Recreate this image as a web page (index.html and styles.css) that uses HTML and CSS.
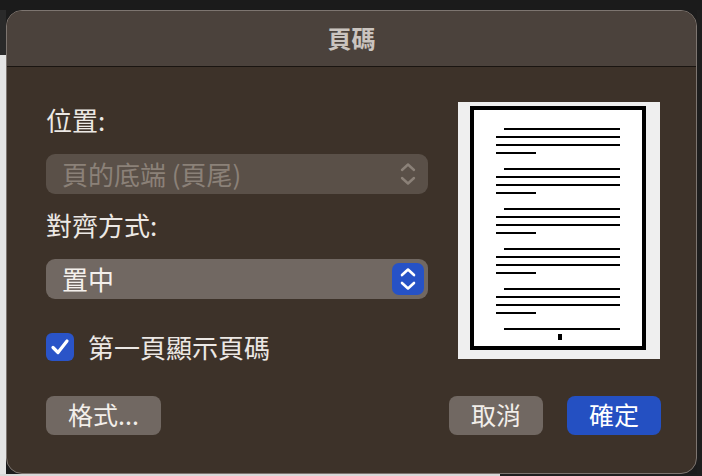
FILE: index.html
```html
<!DOCTYPE html>
<html lang="zh-Hant">
<head>
  <meta charset="UTF-8">
  <meta name="viewport" content="width=device-width, initial-scale=1.0">
  <title>頁碼</title>
  <link rel="stylesheet" href="styles.css">
</head>
<body>

  <div class="top-strip"></div>

  <div class="desk">
    <div class="side-left"></div>

    <!-- 頁碼 對話框 -->
    <div class="dialog">
      <div class="titlebar">頁碼</div>

      <div class="content">
        <div class="options">
          <label class="field-label">位置:</label>
          <div class="popup disabled">
            <span>頁的底端 (頁尾)</span>
            <svg class="chevrons" width="20" height="26" viewBox="0 0 20 26">
              <path d="M4 9 L10 3.5 L16 9 M4 17 L10 22.5 L16 17" fill="none" stroke="#8b8178" stroke-width="2.4" stroke-linecap="round" stroke-linejoin="round"/>
            </svg>
          </div>

          <label class="field-label second">對齊方式:</label>
          <div class="popup">
            <span>置中</span>
            <div class="popup-arrows">
              <svg width="20" height="26" viewBox="0 0 20 26">
                <path d="M4 9 L10 3.5 L16 9 M4 17 L10 22.5 L16 17" fill="none" stroke="#ffffff" stroke-width="2.6" stroke-linecap="round" stroke-linejoin="round"/>
              </svg>
            </div>
          </div>

          <div class="check-row">
            <span class="checkbox">
              <svg width="28" height="28" viewBox="0 0 28 28">
                <path d="M7 14.5 L12 19.5 L21 8" fill="none" stroke="#ffffff" stroke-width="3.2" stroke-linecap="round" stroke-linejoin="round"/>
              </svg>
            </span>
            <span>第一頁顯示頁碼</span>
          </div>
        </div>

        <!-- 預覽 -->
        <div class="preview">
          <svg width="202" height="257" viewBox="0 0 202 257">
            <rect x="0" y="0" width="202" height="257" fill="#efefef"/>
            <rect x="14" y="6" width="172" height="240" fill="#ffffff" stroke="#000" stroke-width="4"/>
            <g fill="#000">
              <rect x="46" y="26" width="116" height="2"/>
              <rect x="38" y="34" width="124" height="2"/>
              <rect x="38" y="42" width="124" height="2"/>
              <rect x="38" y="50" width="40" height="2"/>

              <rect x="46" y="66" width="116" height="2"/>
              <rect x="38" y="74" width="124" height="2"/>
              <rect x="38" y="82" width="124" height="2"/>
              <rect x="38" y="90" width="40" height="2"/>

              <rect x="46" y="106" width="116" height="2"/>
              <rect x="38" y="114" width="124" height="2"/>
              <rect x="38" y="122" width="124" height="2"/>
              <rect x="38" y="130" width="40" height="2"/>

              <rect x="46" y="146" width="116" height="2"/>
              <rect x="38" y="154" width="124" height="2"/>
              <rect x="38" y="162" width="124" height="2"/>
              <rect x="38" y="170" width="40" height="2"/>

              <rect x="46" y="186" width="116" height="2"/>
              <rect x="38" y="194" width="124" height="2"/>
              <rect x="38" y="202" width="124" height="2"/>
              <rect x="38" y="210" width="40" height="2"/>

              <rect x="46" y="226" width="116" height="2"/>
              <rect x="100" y="232" width="4" height="6"/>
            </g>
          </svg>
        </div>
      </div>

      <div class="footer">
        <button class="btn">格式...</button>
        <div class="footer-right">
          <button class="btn">取消</button>
          <button class="btn primary">確定</button>
        </div>
      </div>
    </div>

    <div class="side-right"></div>
  </div>

  <div class="bottom-strip"></div>

</body>
</html>
```

FILE: styles.css
```css
* {
  margin: 0;
  padding: 0;
  box-sizing: border-box;
}

body {
  width: 702px;
  height: 476px;
  overflow: hidden;
  background-color: #1c1c1c;
  font-family: "Noto Sans CJK TC", "Noto Sans", sans-serif;
  color: #ece8e4;
}

.top-strip {
  height: 10px;
  background-color: #1b1b1b;
}

.desk {
  display: flex;
  height: 464px;
}

.side-left {
  width: 6px;
  background: linear-gradient(#2a2a2a 0 45px, #e4e4e4 45px);
}

.side-right {
  flex: 1;
  background-color: #1e1e1e;
}

.bottom-strip {
  height: 2px;
  background: linear-gradient(90deg, #d8d8d8 0 500px, #1e1e1e 500px);
}

.dialog {
  width: 691px;
  height: 464px;
  border: 1px solid #7d7570;
  border-radius: 16px;
  background-color: #3d3229;
  overflow: hidden;
  display: flex;
  flex-direction: column;
}

.titlebar {
  height: 56px;
  line-height: 54px;
  background-color: #4b423c;
  border-bottom: 1px solid #1a1511;
  text-align: center;
  font-size: 24px;
  font-weight: bold;
  color: #cac4bf;
}

.content {
  display: flex;
  gap: 30px;
  padding: 35px 36px 0 39px;
}

.options {
  width: 382px;
  padding-top: 3px;
  display: flex;
  flex-direction: column;
}

.field-label {
  display: block;
  font-size: 26px;
  line-height: 30px;
  color: #ece8e4;
}

.field-label.second {
  margin-top: 16px;
}

.popup {
  height: 40px;
  margin-top: 19px;
  padding: 0 4px 0 16px;
  border-radius: 9px;
  background-color: #716862;
  display: flex;
  align-items: center;
  justify-content: space-between;
  font-size: 26px;
  line-height: 38px;
  color: #f4f0ec;
}

.popup.disabled {
  background-color: #5a5048;
  color: #8b8178;
  padding-right: 10px;
}

.popup-arrows {
  width: 32px;
  height: 32px;
  border-radius: 7px;
  background-color: #2652c6;
  display: flex;
  align-items: center;
  justify-content: center;
}

.check-row {
  margin-top: 34px;
  display: flex;
  align-items: center;
  gap: 14px;
  font-size: 26px;
  line-height: 28px;
}

.checkbox {
  width: 28px;
  height: 28px;
  border-radius: 6px;
  background-color: #2a54c8;
  display: flex;
}

.preview {
  width: 202px;
  height: 257px;
}

.preview svg {
  display: block;
}

.footer {
  margin-top: 35px;
  padding: 0 35px 0 39px;
  display: flex;
  justify-content: space-between;
}

.footer-right {
  display: flex;
  gap: 24px;
}

.btn {
  height: 39px;
  padding: 0 22px 3px;
  border: none;
  border-radius: 8px;
  background-color: #716862;
  font-family: "Noto Sans CJK TC", "Noto Sans", sans-serif;
  font-size: 25px;
  line-height: 36px;
  color: #f2eeea;
}

.btn.primary {
  background-color: #2450c2;
  color: #ffffff;
}
```
